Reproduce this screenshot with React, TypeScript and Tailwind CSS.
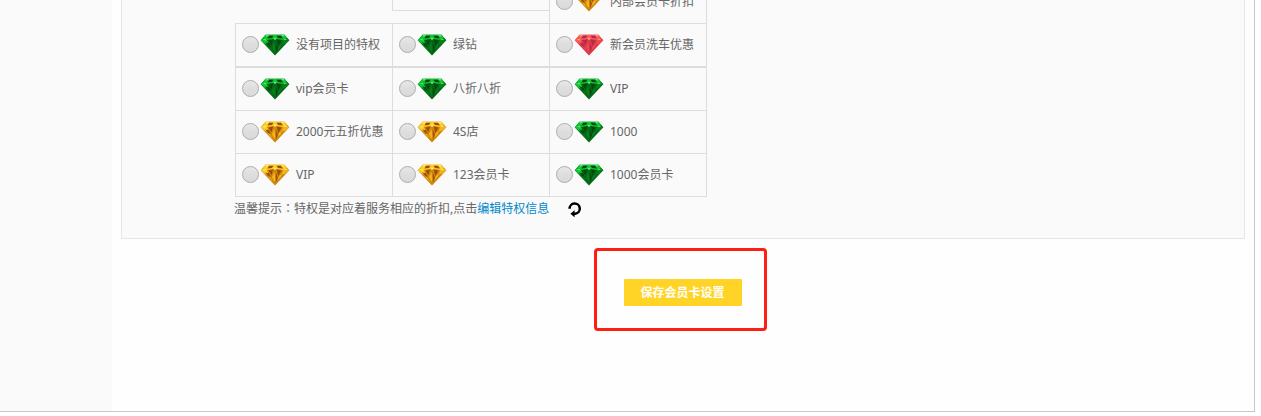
import { cx } from "class-variance-authority";

type GemColor = "green" | "gold" | "red";

interface Privilege {
  label: string;
  gem: GemColor;
}

interface Palette {
  base: string;
  light: string;
  dark: string;
  shine: string;
  mid: string;
}

const palettes: Record<GemColor, Palette> = {
  green: {
    base: "#056816",
    light: "#0fc832",
    dark: "#03480d",
    shine: "#7df08f",
    mid: "#067f1b",
  },
  gold: {
    base: "#cf850c",
    light: "#fbd02a",
    dark: "#9c4d08",
    shine: "#fff28c",
    mid: "#f2b41c",
  },
  red: {
    base: "#d93a4c",
    light: "#fb5f54",
    dark: "#b02a4e",
    shine: "#ffaea4",
    mid: "#ee4a4a",
  },
};

const newest: Privilege[] = [
  { label: "没有项目的特权", gem: "green" },
  { label: "绿钻", gem: "green" },
  { label: "新会员洗车优惠", gem: "red" },
];

const privileges: Privilege[][] = [
  [
    { label: "vip会员卡", gem: "green" },
    { label: "八折八折", gem: "green" },
    { label: "VIP", gem: "green" },
  ],
  [
    { label: "2000元五折优惠", gem: "gold" },
    { label: "4S店", gem: "gold" },
    { label: "1000", gem: "green" },
  ],
  [
    { label: "VIP", gem: "gold" },
    { label: "123会员卡", gem: "gold" },
    { label: "1000会员卡", gem: "green" },
  ],
];

// === Icons ==================================================================

const Gem: React.FC<{ color: GemColor }> = ({ color }) => {
  const { base, light, dark, shine, mid } = palettes[color];

  return (
    <svg width="30" height="22" viewBox="0 0 30 22" className="shrink-0">
      <path d="M5.5.8h19l4.8 5.4L15 21.4.7 6.2z" fill={base} />
      <path d="M5.5.8h19l2.6 3.4-4 1.8L15 4.6 7 6 2.8 4.2z" fill={light} />
      <path d="M9 1.8h4.5L12 4 7.5 4.4zM16.5 1.8H21l2 2.6-5-.4z" fill={dark} />
      <path d="M.7 6.2 2.8 4.2 7 6l2 5.4L4.8 9.8z" fill={light} />
      <path d="m29.3 6.2-2.2-2-4 1.8-1.6 4.6 3.7-.8z" fill={mid} />
      <path d="m5 8.4 4 .8 1.8 4-2-1z" fill={dark} />
      <path d="M8.5 6.4 13 5.8l-1.6 5.4zM17 5.8l4.4.8-3.2 5.8z" fill={dark} />
      <path d="m12 13 2.6-5.4.6 8.4-1 2z" fill={mid} />
      <path d="m15.8 9 2 4.6-1.6 4.6z" fill={dark} />
      <path d="m19 11.8 3.4-2.6-2 4.4-3 2.8z" fill={mid} />
      <path d="m7.4 11.8 3 1.6 2.2 4.4z" fill={mid} />
      <path d="m2.6 5.6 2.8-.6 1.2 1.6zM27.4 5.6 24.6 5l-.8 1.2z" fill={shine} />
      <path d="m13.6 4.8 1.4-1 1.6 1-1.6 1.2z" fill={shine} />
      <path d="m6 1 3 .2-2.5 1.3zM24 1l-3 .2 2.5 1.3z" fill={shine} />
    </svg>
  );
};

const RefreshIcon: React.FC = () => (
  <svg width="14" height="16" viewBox="0 0 14 16" className="shrink-0">
    <path
      d="M1.6 6.8A5.1 5.1 0 1 1 7.4 11.7H6"
      fill="none"
      stroke="#000"
      strokeWidth="2.5"
    />
    <path d="M6.6 8.2v7L2.4 11.7z" fill="#000" />
  </svg>
);

// === Table ==================================================================

const Option: React.FC<Privilege> = ({ label, gem }) => (
  <label className="flex items-center pl-1.5">
    <input
      type="radio"
      name="privilege"
      className="mb-px size-[17px] shrink-0 appearance-none rounded-full border border-[#acacac] bg-linear-to-b from-[#e8e8e8] via-[#dedede] to-[#dadada]"
    />
    <span className="mb-px ml-px flex">
      <Gem color={gem} />
    </span>
    <span className="ml-1.5 whitespace-nowrap">{label}</span>
  </label>
);

const Row: React.FC<{ items: Privilege[]; first?: boolean }> = ({
  items,
  first,
}) => (
  <div
    className={cx(
      "grid w-[472px] grid-cols-[157px_157px_157px] divide-x divide-[#ddd] border-x border-b border-[#ddd]",
      first ? "h-11 border-t" : "h-[43px]"
    )}
  >
    {items.map((item) => (
      <Option key={item.label} {...item} />
    ))}
  </div>
);

const PrivilegeTable: React.FC = () => (
  <div className="ml-[113px] w-[472px]">
    <div className="flex h-[23px] items-start pl-[157px]">
      <div className="h-[11px] w-[157px] border-b border-l border-[#ddd]" />
      <div className="flex h-[23px] w-[158px] items-end border-x border-[#ddd] pb-2.5">
        <Option label="内部会员卡折扣" gem="gold" />
      </div>
    </div>
    <Row items={newest} first />
    {privileges.map((items, i) => (
      <Row key={i} items={items} first={i === 0} />
    ))}
  </div>
);

// === Page ===================================================================

export default function App() {
  return (
    <div className="h-[416px] w-[1261px] overflow-hidden bg-white font-['Noto_Sans','Noto_Sans_CJK_SC',sans-serif] text-xs text-[#666]">
      <div className="flex h-[412px] w-[1255px] border-r border-b border-[#c8c8c8]">
        <aside className="w-28 shrink-0 bg-[#fafafa]" />
        <main className="flex-1 bg-[#fefefe] pl-[9px]">
          <section className="h-[239px] w-[1124px] border-x border-b border-[#e6e6e6] bg-[#fafafa]">
            <PrivilegeTable />
            <div className="ml-28 flex h-6 items-center">
              <p className="pb-px">
                温馨提示
                <span className="font-['Noto_Sans_CJK_TC',sans-serif]">：</span>
                特权是对应着服务相应的折扣,点击
                <a href="#" className="text-[#0088cc]">
                  编辑特权信息
                </a>
              </p>
              <button className="mt-0.5 ml-[19px]">
                <RefreshIcon />
              </button>
            </div>
          </section>
          <div className="mt-[9px] ml-[473px] flex h-[83px] w-[173px] items-center justify-center rounded-[4px] border-3 border-[#ff1e14] pt-1.5 pl-1">
            <button className="h-[27px] w-[118px] rounded-[1px] bg-[#ffd426] font-bold text-white">
              保存会员卡设置
            </button>
          </div>
        </main>
      </div>
    </div>
  );
}
